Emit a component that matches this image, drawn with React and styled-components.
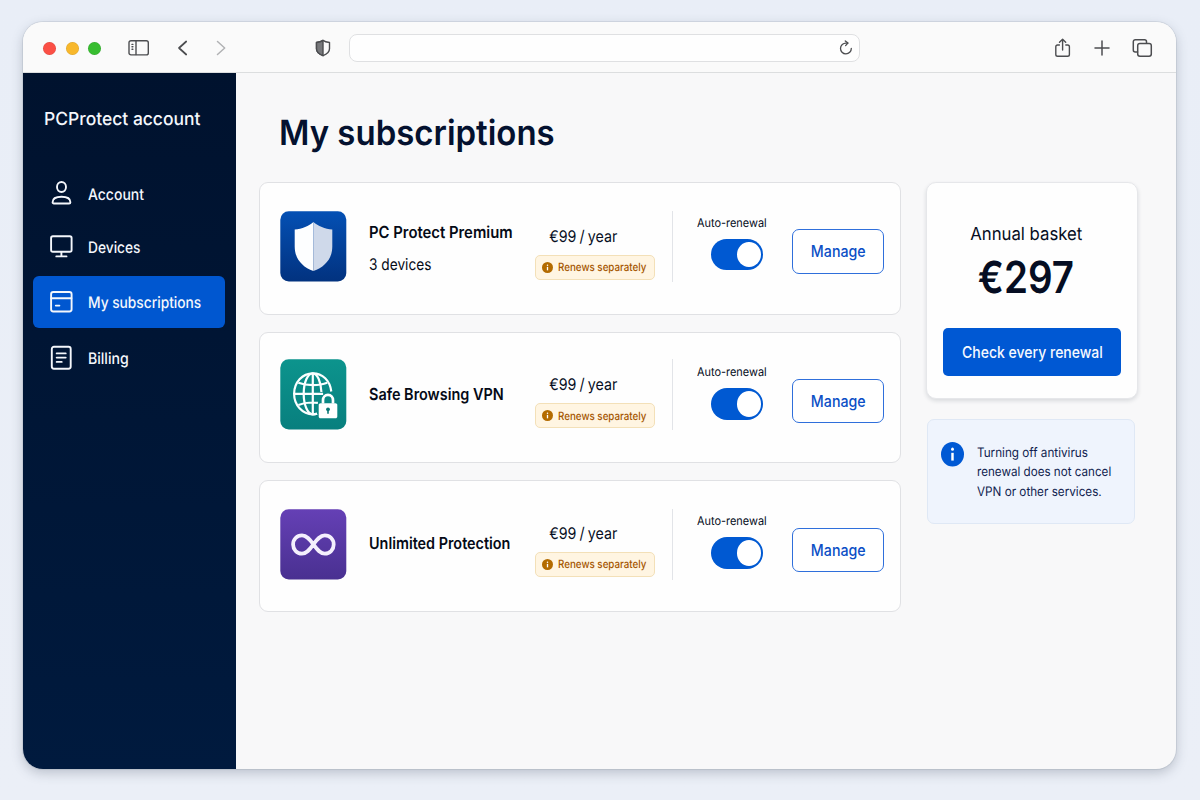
import React from "react"
import styled, { createGlobalStyle } from "styled-components"

const GlobalStyle = createGlobalStyle`
  * {
    box-sizing: border-box;
  }

  body {
    margin: 0;
    background: #eaeef7;
    color: #050d22;
    font-family: Inter, "Liberation Sans", sans-serif;
    text-rendering: geometricPrecision;
  }

  button {
    font-family: inherit;
    padding: 0;
    cursor: pointer;
  }

  svg {
    display: block;
    flex: none;
  }
`

const Page = styled.div`
  height: 800px;
  padding: 22px 24px 31px 23px;
  background: linear-gradient(#e9eef7, #ebeff7);
  overflow: hidden;
`

const Window = styled.div`
  display: flex;
  flex-direction: column;
  height: 747px;
  border-radius: 20px;
  overflow: hidden;
  background: #f8f8f9;
  box-shadow: 0 0 0 1px rgba(120, 130, 145, 0.16),
    0 4px 12px rgba(50, 60, 80, 0.26);
`

/* condensed text, the layout box keeps its natural width */
const Text = styled.span`
  display: block;
  white-space: nowrap;
  font-size: ${p => p.size}px;
  font-weight: ${p => p.weight || 400};
  line-height: ${p => p.line || 20}px;
  color: ${p => p.color || "inherit"};
  word-spacing: ${p => p.gap || 0}px;
  transform: scaleX(${p => p.squeeze || 1});
  transform-origin: ${p => (p.center ? "center" : "left")};
`

const Toolbar = styled.header`
  display: flex;
  align-items: center;
  flex: none;
  height: 51px;
  padding: 1px 0 0 20px;
  border-bottom: 1px solid #dcdedf;
  background: #fafafa;
  color: #4c4d50;
`

const Lights = styled.div`
  display: flex;
  gap: 9.5px;
  padding-top: 1px;
`

const Light = styled.span`
  width: 13px;
  height: 13px;
  border-radius: 50%;
  background: ${p => p.color};
  box-shadow: inset 0 0 0 0.5px rgba(0, 0, 0, 0.12);
`

const ToolButton = styled.span`
  margin-left: ${p => p.gap}px;
  color: ${p => p.color || "inherit"};
`

const AddressBar = styled.div`
  display: flex;
  align-items: center;
  justify-content: flex-end;
  width: 511px;
  height: 28px;
  margin-left: 18px;
  padding: 1px 6px 0 0;
  border: 1px solid #dfe0e2;
  border-radius: 8px;
  background: #fefefe;
`

const Body = styled.div`
  display: flex;
  flex: 1;
`

const Sidebar = styled.nav`
  width: 213.4px;
  padding: 35px 11px 0 10px;
  background: linear-gradient(#00122e, #001a3e);
  color: #f4f7fc;
`

const Brand = styled.div`
  padding: 0 0 36px 10.5px;
`

const NavItem = styled.a`
  display: flex;
  align-items: center;
  gap: 15px;
  height: 52px;
  margin-top: ${p => p.gap}px;
  padding-left: 16px;
  border-radius: 6px;
  background: ${p => (p.$active ? "#0057d0" : "transparent")};

  ${Text} {
    padding-top: 2px;
  }
`

const Main = styled.main`
  flex: 1;
  padding: 40px 0 0 22.5px;
`

const Title = styled.h1`
  margin: 0 0 29px;
  padding-left: 20px;
`

const Columns = styled.div`
  display: flex;
  gap: 25px;
`

const Cards = styled.div`
  display: flex;
  flex-direction: column;
  gap: 17px;
  width: 642.5px;
`

const Card = styled.section`
  display: flex;
  height: ${p => p.height}px;
  padding: ${p => p.top - 1}px 0 0 20px;
  border: 1px solid #e0e1e4;
  border-radius: 9px;
  background: #fefefe;
`

const Product = styled.div`
  display: flex;
  align-items: center;
  gap: 22px;
  width: 255px;
  height: 71px;
`

const Names = styled.div`
  display: flex;
  flex-direction: column;
  gap: 11.5px;
  padding: ${p => p.top}px 0 ${p => p.bottom || 0}px;
  color: #050a16;
`

const Price = styled.div`
  width: 137px;
  padding-top: ${p => p.top}px;
`

const PriceText = styled(Text)`
  padding-left: 16px;
`

const Badge = styled.div`
  display: flex;
  align-items: center;
  gap: 5px;
  width: 120px;
  height: 25px;
  margin-top: 9px;
  padding-left: 6.5px;
  border: 1px solid #f3e0b8;
  border-radius: 5px;
  background: #fff5e2;
  color: #a55600;
`

const Renewal = styled.div`
  display: flex;
  flex-direction: column;
  gap: 8px;
  width: 120px;
  height: 71px;
  padding: ${p => p.top}px 0 0 24px;
  border-left: 1px solid #e2e4e8;
`

const Toggle = styled.span`
  display: flex;
  justify-content: flex-end;
  width: 52px;
  height: 31.5px;
  margin-left: 14px;
  padding: 3px 2px;
  border-radius: 16px;
  background: #0059d2;
`

const Knob = styled.span`
  width: 24px;
  height: 25.5px;
  border-radius: 50%;
  background: #fff;
`

const ManageButton = styled.button`
  display: flex;
  align-items: center;
  justify-content: center;
  width: 92px;
  height: 44.5px;
  margin-top: ${p => p.top}px;
  padding-top: ${p => p.nudge}px;
  border: 1px solid #2f6fdb;
  border-radius: 7px;
  background: #fff;
  color: #0b4fc6;
`

const Aside = styled.aside`
  display: flex;
  flex-direction: column;
  gap: 20px;
  width: 211.5px;
`

const Basket = styled.section`
  display: flex;
  flex-direction: column;
  align-items: center;
  height: 217px;
  padding: 42px 1px 0 0;
  border: 1px solid #e6e7ea;
  border-radius: 10px;
  background: #fefefe;
  box-shadow: 0 2px 4px rgba(30, 40, 60, 0.14);
`

const Total = styled.div`
  display: flex;
  flex-direction: column;
  align-items: center;
  gap: 2px;
  height: 78px;
  margin-right: 11px;
`

const CheckButton = styled.button`
  display: flex;
  align-items: center;
  justify-content: center;
  width: 178px;
  height: 48px;
  margin-top: 25px;
  padding-left: 2px;
  border: 0;
  border-radius: 5px;
  background: #0058d3;
  color: #f6f9ff;
`

const Notice = styled.section`
  display: flex;
  gap: 12.5px;
  width: 208px;
  height: 105px;
  margin-left: 1px;
  padding: 22px 0 0 13px;
  border: 1px solid #dfe8f5;
  border-radius: 7px;
  background: #eff4fd;
  color: #101d4f;
`

const NoticeText = styled.div`
  padding-top: 1.5px;
`

const Icon = ({ w, h, sw = 1.5, children }) => (
  <svg
    width={w}
    height={h}
    viewBox={`0 0 ${w} ${h}`}
    fill="none"
    stroke="currentColor"
    strokeWidth={sw}
    strokeLinecap="round"
    strokeLinejoin="round"
  >
    {children}
  </svg>
)

const PanelIcon = () => (
  <Icon w={22} h={18} sw={1.4}>
    <rect x="1" y="1.7" width="19.3" height="14.2" rx="2" />
    <path d="M8 2v13.6" />
    <path d="M4 5.4h.9M4 7.8h.9M4 10.2h.9" />
  </Icon>
)

const ShieldHalfIcon = () => (
  <Icon w={16} h={18} sw={1.4}>
    <path d="M8 1.4C6.2 2.7 4 3.2 1.5 3.5v6.3c0 3.2 2.6 5.4 6.5 6.9 3.9-1.5 6.5-3.7 6.5-6.9V3.5C12 3.2 9.8 2.7 8 1.4z" />
    <path
      d="M8 1.4C6.2 2.7 4 3.2 1.5 3.5v6.3c0 3.2 2.6 5.4 6.5 6.9z"
      fill="#77787b"
    />
  </Icon>
)

const ReloadIcon = () => (
  <Icon w={14} h={16} sw={1.3}>
    <path d="M12.3 8.4a5.4 5.4 0 1 1-5.1-5.3h1.6" />
    <path d="M6.3 .9l2.6 2.2-2.3 2.5" />
  </Icon>
)

const ShareIcon = () => (
  <Icon w={18} h={20} sw={1.4}>
    <path d="M5.4 7H3.6a1.8 1.8 0 0 0-1.8 1.8v7.6a1.8 1.8 0 0 0 1.8 1.8h10a1.8 1.8 0 0 0 1.8-1.8V8.8A1.8 1.8 0 0 0 13.6 7h-1.8" />
    <path d="M8.6 12V1.4M5.5 4.2l3.1-3 3.1 3" />
  </Icon>
)

const TabsIcon = () => (
  <Icon w={22} h={20} sw={1.5}>
    <rect x="5.7" y="5.4" width="13.6" height="12.8" rx="2.2" />
    <path d="M5.5 14H3.3a2 2 0 0 1-2-2V3.7a2 2 0 0 1 2-2h9.2a2 2 0 0 1 2 2v1.5" />
  </Icon>
)

const UserIcon = () => (
  <Icon w={24} h={26} sw={1.9}>
    <ellipse cx="12.5" cy="6" rx="4.5" ry="5" />
    <path d="M3.6 21.2c0-3.7 3.6-5.5 8.9-5.5s8.9 1.8 8.9 5.5c0 .8-.5 1.3-1.3 1.3H4.900c-.8 0-1.3-.5-1.3-1.3z" />
  </Icon>
)

const MonitorIcon = () => (
  <Icon w={24} h={26} sw={1.9}>
    <rect x="2.1" y="2.2" width="20.5" height="15.5" rx="1.8" />
    <path d="M12.4 18v4.3M7.3 22.4h10.2" />
  </Icon>
)

const CardIcon = () => (
  <Icon w={24} h={24} sw={1.9}>
    <rect x="2.1" y="2" width="20.5" height="19.5" rx="2.2" />
    <path d="M2.2 8.2h20.2M6.8 15.6h3.6" />
  </Icon>
)

const BillIcon = () => (
  <Icon w={24} h={26} sw={1.9}>
    <rect x="2.800" y="1.7" width="18.9" height="22" rx="2.2" />
    <path d="M7.7 8.4h9M7.7 12.6h9M7.7 16.9h5" />
  </Icon>
)

const InfoIcon = ({ w, h, fill, dot }) => (
  <svg width={w} height={h} viewBox="0 0 24 24" preserveAspectRatio="none">
    <circle cx="12" cy="12" r="12" fill={fill} />
    <circle cx="12" cy="7" r={dot} fill="#fff" />
    <path d="M12 10.6v7.6" stroke="#fff" strokeWidth={dot * 1.7} />
  </svg>
)

const Tile = ({ id, from, to, children }) => (
  <svg width="67" height="71" viewBox="0 0 67 71" fill="none">
    <defs>
      <linearGradient id={id} x1="0" y1="0" x2="0" y2="1">
        <stop offset="0" stopColor={from} />
        <stop offset="1" stopColor={to} />
      </linearGradient>
    </defs>
    <rect x=".3" y=".3" width="66" height="70.2" rx="8.5" fill={`url(#${id})`} />
    {children}
  </svg>
)

const ShieldTile = () => (
  <Tile id="shield" from="#0450b4" to="#02327f">
    <path
      d="M33.4 11C29 15 22 18 14.7 18.4v17C14.7 47.5 22 56 33.4 60z"
      fill="#fdfeff"
    />
    <path
      d="M33.4 11C38 15 45 18 52.3 18.4v17C52.3 47.5 45 56 33.4 60z"
      fill="#cfd9ea"
    />
  </Tile>
)

const GlobeTile = () => (
  <Tile id="globe" from="#0c948d" to="#087f7e">
    <g stroke="#fbffff" strokeWidth="2.2">
      <path d="M51.3 32.5C50 21.5 42.5 14.3 32.8 14.3c-10.4 0-18.7 9.2-18.7 20.5s8.3 20.5 18.7 20.5c1.6 0 3-.2 4.3-.6" />
      <path d="M37 54.6c-1.4.5-2.8.7-4.3.7-5 0-9-9.2-9-20.5s4-20.5 9-20.5c4.6 0 8.3 8.2 8.7 18.7" />
      <path d="M32.8 14.3v41M14.1 34.8h29M18.4 23.8c8 3.2 21 3.2 28.8 0M18.4 46c5.3-2.2 12-3 19.5-2.1" />
    </g>
    <path
      d="M40.5 44.2h15c1 0 1.8.8 1.8 1.8v11.5c0 1-.8 1.8-1.8 1.8h-15c-1 0-1.8-.8-1.8-1.8V46c0-1 .8-1.8 1.8-1.8z"
      fill="#fff"
    />
    <path
      d="M43 44.5v-3.3c0-3.2 2.1-5.3 5-5.3s5 2.1 5 5.3v3.3"
      stroke="#fff"
      strokeWidth="2.7"
    />
    <circle cx="48" cy="50.3" r="1.9" fill="#0b7775" />
    <path d="M48 50.5v4.3" stroke="#0b7775" strokeWidth="1.6" />
  </Tile>
)

const InfinityTile = () => (
  <Tile id="infinity" from="#6540b5" to="#493091">
    <path
      d="M33.4 35.4c-3.5-4.7-6.5-9-11.4-9-5.2 0-8.9 4-8.900 9s3.7 9.3 8.9 9.3c4.9 0 7.9-4.5 11.4-9.3 3.5-4.7 6.5-9 11.4-9 5.2 0 8.9 4 8.9 9s-3.7 9.3-8.9 9.3c-4.9 0-7.9-4.5-11.4-9.3z"
      stroke="#f4effd"
      strokeWidth="3.8"
    />
  </Tile>
)

const nav = [
  { label: "Account", icon: <UserIcon />, gap: 0, squeeze: 0.885 },
  { label: "Devices", icon: <MonitorIcon />, gap: 1, squeeze: 0.87 },
  { label: "My subscriptions", icon: <CardIcon />, gap: 3, squeeze: 0.87, active: true },
  { label: "Billing", icon: <BillIcon />, gap: 4, squeeze: 0.893 },
]

const subscriptions = [
  {
    name: "PC Protect Premium",
    note: "3 devices",
    squeeze: 0.9,
    icon: <ShieldTile />,
    height: 133,
    top: 29,
    nameTop: 3,
    priceTop: 14.5,
    renewalTop: 3.5,
    manageTop: 18,
    manageNudge: 1,
  },
  {
    name: "Safe Browsing VPN",
    squeeze: 0.875,
    icon: <GlobeTile />,
    height: 131,
    top: 27,
    nameTop: 0,
    nameBottom: 2,
    priceTop: 15,
    renewalTop: 5,
    manageTop: 19.5,
    manageNudge: 2,
  },
  {
    name: "Unlimited Protection",
    squeeze: 0.872,
    icon: <InfinityTile />,
    height: 132,
    top: 29,
    nameTop: 0,
    nameBottom: 3,
    priceTop: 13.5,
    renewalTop: 4,
    manageTop: 18.5,
    manageNudge: 2,
  },
]

const Subscription = ({ item }) => (
  <Card height={item.height} top={item.top}>
    <Product>
      {item.icon}
      <Names top={item.nameTop} bottom={item.nameBottom}>
        <Text size={16.5} weight={600} squeeze={item.squeeze}>
          {item.name}
        </Text>
        {item.note && (
          <Text size={16} squeeze={0.855}>
            {item.note}
          </Text>
        )}
      </Names>
    </Product>
    <Price top={item.priceTop}>
      <PriceText size={16} squeeze={0.89} gap={-1}>
        €99 / year
      </PriceText>
      <Badge>
        <InfoIcon w={11} h={11} fill="#b36b00" dot={1.7} />
        <Text size={11.3} weight={500} squeeze={0.865}>
          Renews separately
        </Text>
      </Badge>
    </Price>
    <Renewal top={item.renewalTop}>
      <Text size={12} line={16} squeeze={0.91}>
        Auto-renewal
      </Text>
      <Toggle>
        <Knob />
      </Toggle>
    </Renewal>
    <ManageButton top={item.manageTop} nudge={item.manageNudge}>
      <Text size={15.7} weight={500} squeeze={0.905} center>
        Manage
      </Text>
    </ManageButton>
  </Card>
)

const App = () => (
  <Page>
    <GlobalStyle />
    <Window>
      <Toolbar>
        <Lights>
          <Light color="#fb4f45" />
          <Light color="#f8b82c" />
          <Light color="#37bd30" />
        </Lights>
        <ToolButton gap={27}>
          <PanelIcon />
        </ToolButton>
        <ToolButton gap={27}>
          <Icon w={12} h={18} sw={1.7}>
            <path d="M9.2 2.5L2 9l7.2 6.5" />
          </Icon>
        </ToolButton>
        <ToolButton gap={26} color="#b1b2b4">
          <Icon w={12} h={18} sw={1.5}>
            <path d="M2.5 2.5L9.7 9l-7.2 6.5" />
          </Icon>
        </ToolButton>
        <ToolButton gap={88}>
          <ShieldHalfIcon />
        </ToolButton>
        <AddressBar>
          <ReloadIcon />
        </AddressBar>
        <ToolButton gap={194}>
          <ShareIcon />
        </ToolButton>
        <ToolButton gap={20.5}>
          <Icon w={18} h={18} sw={1.5}>
            <path d="M9 2v14M2 9h14" />
          </Icon>
        </ToolButton>
        <ToolButton gap={21.5}>
          <TabsIcon />
        </ToolButton>
      </Toolbar>
      <Body>
        <Sidebar>
          <Brand>
            <Text size={18} weight={500} line={24} squeeze={0.97}>
              PCProtect account
            </Text>
          </Brand>
          {nav.map(item => (
            <NavItem key={item.label} gap={item.gap} $active={item.active}>
              {item.icon}
              <Text size={15.8} weight={500} squeeze={item.squeeze}>
                {item.label}
              </Text>
            </NavItem>
          ))}
        </Sidebar>
        <Main>
          <Title>
            <Text size={34.7} weight={600} line={40} squeeze={0.95} color="#04112f">
              My subscriptions
            </Text>
          </Title>
          <Columns>
            <Cards>
              {subscriptions.map(item => (
                <Subscription key={item.name} item={item} />
              ))}
            </Cards>
            <Aside>
              <Basket>
                <Total>
                  <Text size={18} weight={400} squeeze={0.93} center>
                    Annual basket
                  </Text>
                  <Text size={44} weight={600} line={60} squeeze={0.875} center>
                    €297
                  </Text>
                </Total>
                <CheckButton>
                  <Text size={16} weight={500} squeeze={0.875} center>
                    Check every renewal
                  </Text>
                </CheckButton>
              </Basket>
              <Notice>
                <InfoIcon w={23} h={24.5} fill="#0059d4" dot={1.5} />
                <NoticeText>
                  <Text size={13} line={19.6} squeeze={0.9}>
                    Turning off antivirus
                  </Text>
                  <Text size={13} line={19.6} squeeze={0.895}>
                    renewal does not cancel
                  </Text>
                  <Text size={13} line={19.6} squeeze={0.9}>
                    VPN or other services.
                  </Text>
                </NoticeText>
              </Notice>
            </Aside>
          </Columns>
        </Main>
      </Body>
    </Window>
  </Page>
)

export default App
